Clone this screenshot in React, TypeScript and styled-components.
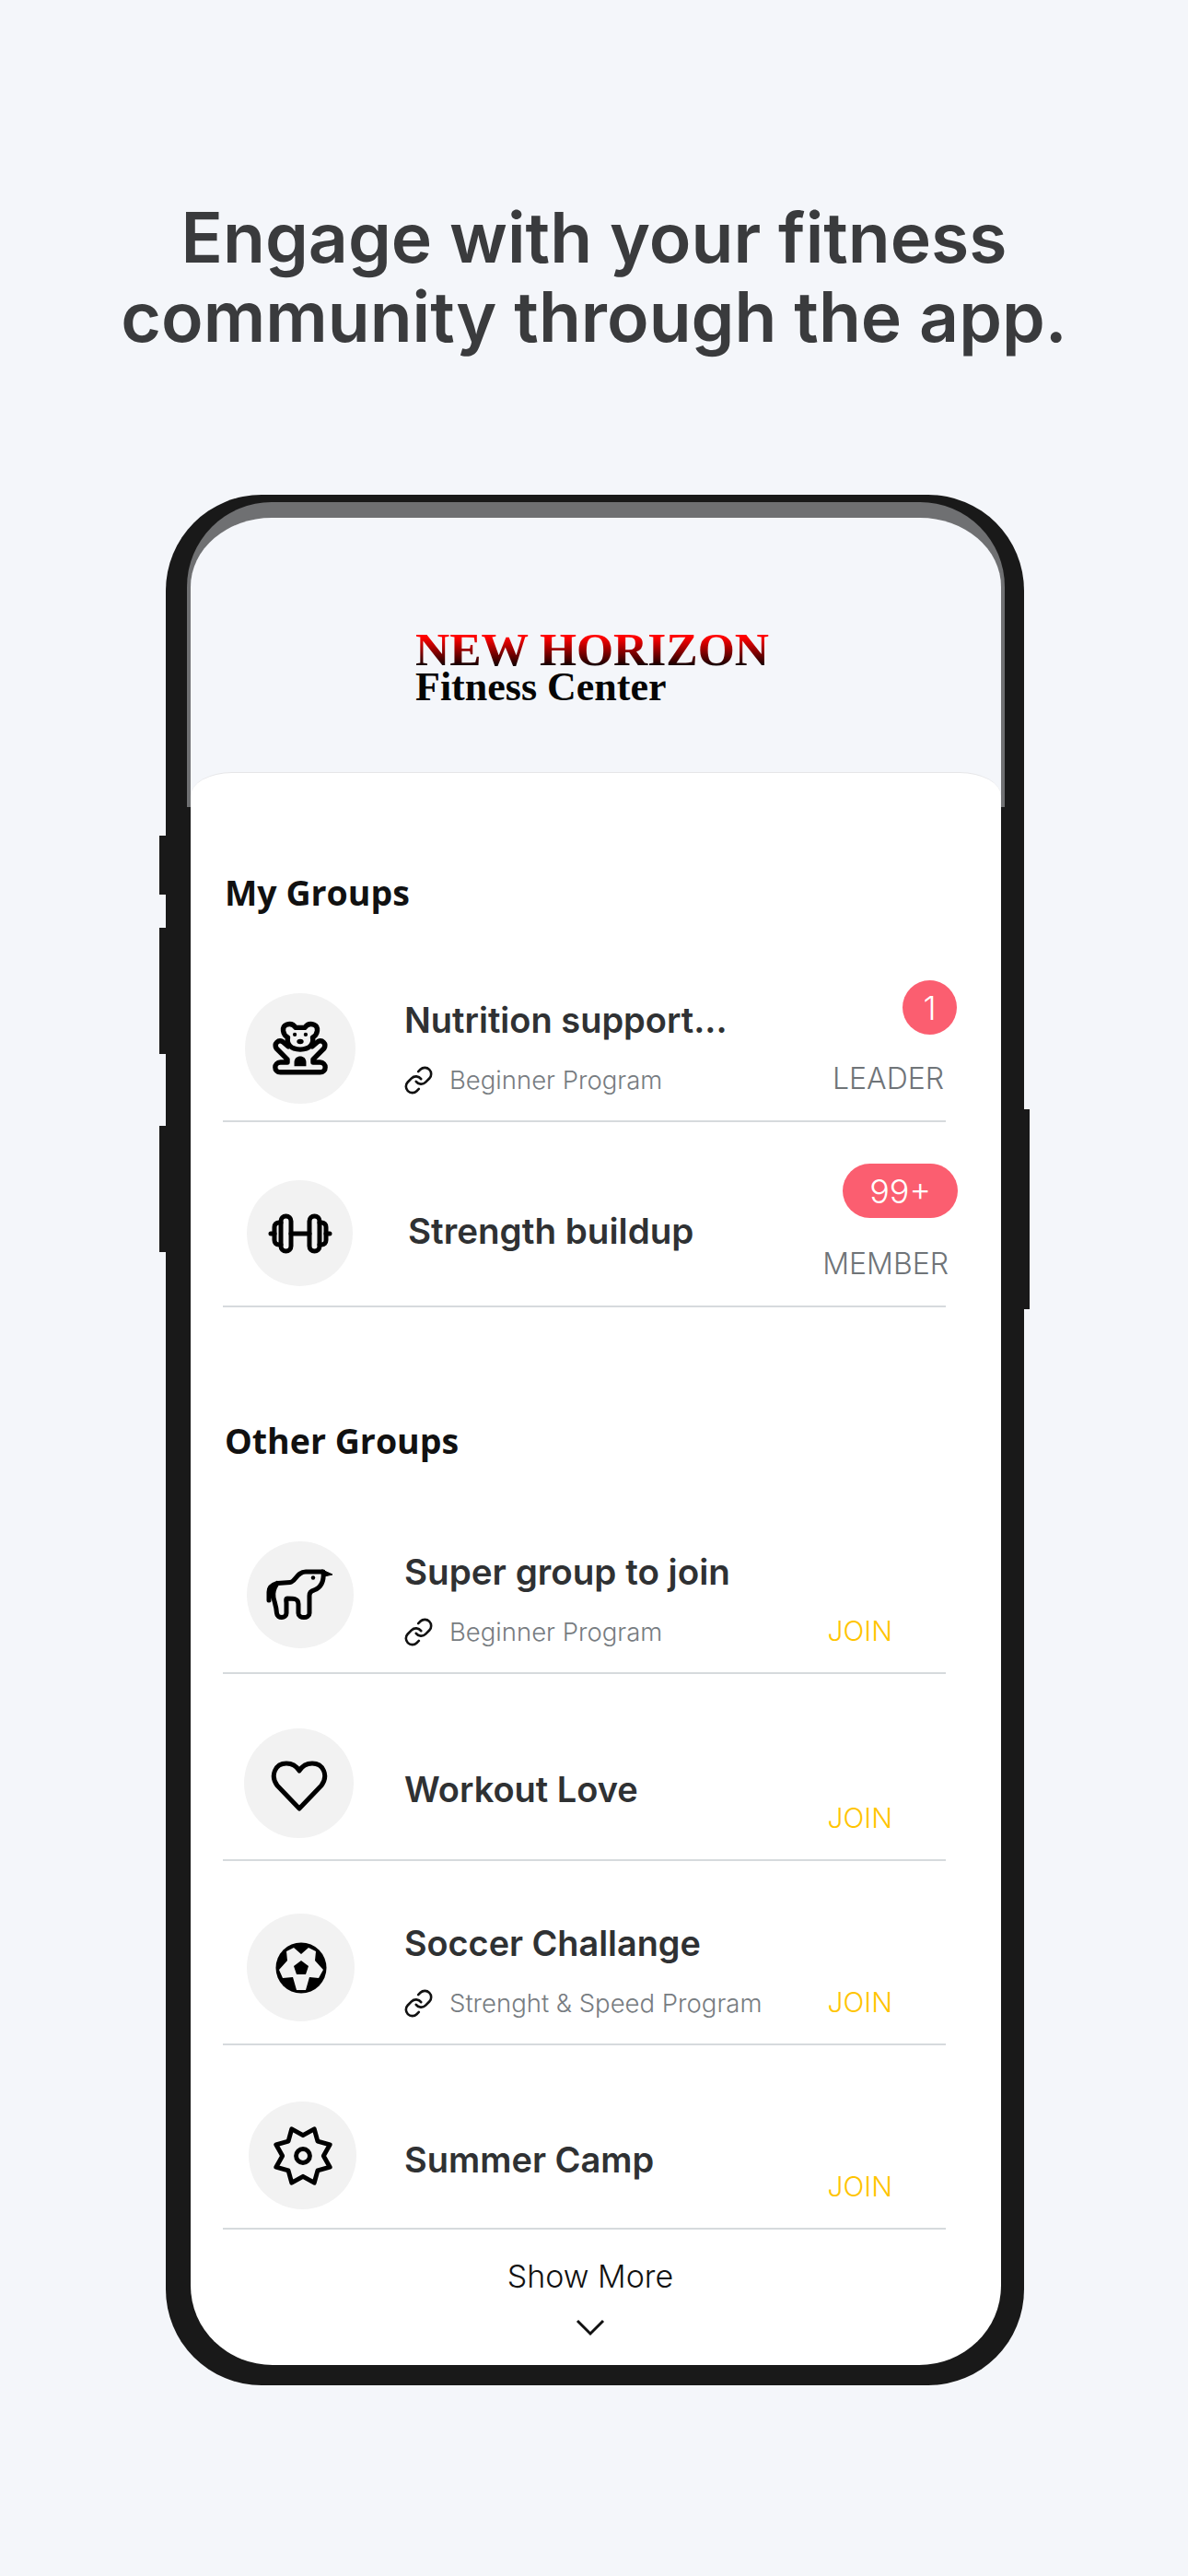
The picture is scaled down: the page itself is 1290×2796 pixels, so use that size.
import React from 'react';
import styled, { createGlobalStyle } from 'styled-components';
import { Link } from 'lucide-react';

const GlobalStyle = createGlobalStyle`
  html, body {
    margin: 0;
    padding: 0;
    background: #f4f6fa;
  }
  * {
    box-sizing: border-box;
  }
`;

const FONT = `Inter, 'Open Sans', sans-serif`;

const Page = styled.div`
  width: 1290px;
  height: 2796px;
  overflow: hidden;
  display: flex;
  flex-direction: column;
  align-items: center;
  background: #f4f6fa;
  font-family: ${FONT};
`;

const Headline = styled.h1`
  margin: 215px 0 0;
  height: 322px;
  font-size: 75px;
  line-height: 86px;
  font-weight: 600;
  color: #3a3b3d;
  text-align: center;
`;

const Phone = styled.div`
  position: relative;
  width: 932px;
  margin-left: 2px;
  padding: 8px 21px 22px 23px;
  border-radius: 104px;
  background: #191919;
`;

const SideButton = styled.span<{ $side: 'left' | 'right'; $top: number; $h: number }>`
  position: absolute;
  top: ${(p) => p.$top}px;
  height: ${(p) => p.$h}px;
  width: 8px;
  background: #191919;
  ${(p) => (p.$side === 'left' ? 'left: -7px;' : 'right: -6px;')}
`;

const Header = styled.header`
  height: 331px;
  margin-bottom: -38px;
  padding: 120px 0 0 244px;
  background: #f4f6fa;
  border-style: solid;
  border-color: #6f7072;
  border-width: 17px 4px 0;
  border-radius: 92px 92px 0 0;
  font-family: 'Liberation Serif', 'Times New Roman', serif;
  font-weight: 700;
`;

const LogoTop = styled.div`
  width: max-content;
  font-size: 51.5px;
  line-height: 46px;
  background: linear-gradient(180deg, #ff0000 22%, #120000 88%);
  -webkit-background-clip: text;
  background-clip: text;
  color: transparent;
`;

const LogoBottom = styled.div`
  font-size: 44px;
  line-height: 35px;
  color: #050505;
`;

const Card = styled.main`
  position: relative;
  margin: 0 4px;
  background: #fff;
  border-top: 1px solid #e6e6e8;
  border-radius: 45px 45px 89px 89px / 26px 26px 86px 86px;
`;

const GroupTitle = styled.h2<{ $top: number; $bottom: number }>`
  margin: ${(p) => p.$top}px 0 ${(p) => p.$bottom}px 37px;
  font-family: 'Open Sans', sans-serif;
  font-size: 37.5px;
  line-height: 52px;
  font-weight: 700;
  color: #111;
`;

const Row = styled.div<{ $h: number }>`
  display: flex;
  align-items: flex-end;
  height: ${(p) => p.$h}px;
  margin: 0 60px 0 35px;
  border-bottom: 2px solid #d6dadd;
`;

const IconSlot = styled.div`
  flex: 0 0 197px;
  align-self: stretch;
  display: flex;
  align-items: flex-end;
`;

const IconCircle = styled.div<{ $size: number; $left: number; $bottom: number }>`
  display: flex;
  align-items: center;
  justify-content: center;
  width: ${(p) => p.$size}px;
  height: ${(p) => p.$size}px;
  margin: 0 0 ${(p) => p.$bottom}px ${(p) => p.$left}px;
  border-radius: 50%;
  background: #f2f2f2;
`;

const Body = styled.div<{ $left: number; $bottom: number }>`
  display: flex;
  flex-direction: column;
  margin: 0 0 ${(p) => p.$bottom}px ${(p) => p.$left}px;
`;

const Title = styled.div<{ $size?: number }>`
  font-size: ${(p) => p.$size ?? 38}px;
  line-height: 46px;
  font-weight: 600;
  color: #2f3133;
  white-space: nowrap;
`;

const Program = styled.div`
  display: flex;
  align-items: center;
  gap: 17px;
  margin: 25px 0 0 -1px;
  font-size: 27.5px;
  line-height: 34px;
  font-weight: 300;
  color: #777c81;
  white-space: nowrap;

  svg {
    flex: none;
    color: #111;
  }
`;

const Meta = styled.div`
  margin-left: auto;
  display: flex;
  flex-direction: column;
  align-items: flex-end;
`;

const Badge = styled.span<{ $right: number; $gap: number; $pad: number }>`
  display: flex;
  align-items: center;
  justify-content: center;
  height: 59px;
  min-width: 59px;
  padding: 0 ${(p) => p.$pad}px;
  margin: 0 ${(p) => p.$right}px ${(p) => p.$gap}px 0;
  border-radius: 30px;
  background: #fb5e70;
  color: #fff;
  font-size: 36px;
  font-weight: 300;
`;

const Role = styled.span<{ $join?: boolean; $right: number }>`
  margin: 0 ${(p) => p.$right}px 28px 0;
  font-size: ${(p) => (p.$join ? 30 : 32)}px;
  line-height: 34px;
  font-weight: 300;
  color: ${(p) => (p.$join ? '#ffc400' : '#6f7478')};
`;

const Footer = styled.button`
  display: flex;
  flex-direction: column;
  align-items: center;
  width: 100%;
  height: 147px;
  padding: 28px 12px 0 0;
  border: 0;
  background: none;
  font-family: ${FONT};
  font-size: 34px;
  line-height: 46px;
  font-weight: 300;
  color: #111;

  svg {
    margin-top: 22px;
  }
`;

const TeddyIcon = () => (
  <svg width="86" height="82" viewBox="0 0 80 76" fill="none" stroke="#000" strokeWidth="5" strokeLinejoin="round" strokeLinecap="round">
    <path d="M27.500 27C22 24 21 16 26 14C30 12.500 33.500 14 35.500 17H44.500C46.500 14 50 12.500 54 14C59 16 58 24 52.500 27C54 33 50 39 40 39C30 39 26 33 27.500 27Z" />
    <path d="M28 36L22 31C18 29 13 33 16 38L27 49V52H20C13 52 13 62 20 62H60C67 62 67 52 60 52H53V49L64 38C67 33 62 29 58 31L52 36" />
    <circle cx="34.500" cy="24" r="2" fill="#000" stroke="none" />
    <circle cx="45.500" cy="24" r="2" fill="#000" stroke="none" />
    <ellipse cx="40" cy="31" rx="3.400" ry="2.600" fill="#000" stroke="none" />
    <path d="M34 56V52C34 44 46 44 46 52V56Z" fill="#000" stroke="none" />
  </svg>
);

const DumbbellIcon = () => (
  <svg width="80" height="80" viewBox="0 0 80 80" fill="none" stroke="#000" strokeWidth="5" strokeLinecap="round" strokeLinejoin="round">
    <rect x="19" y="21" width="11" height="38" rx="5.500" />
    <rect x="50" y="21" width="11" height="38" rx="5.500" />
    <path d="M19 28H17C14 28 12 30 12 33V47C12 50 14 52 17 52H19" />
    <path d="M61 28H63C66 28 68 30 68 33V47C68 50 66 52 63 52H61" />
    <path d="M30 40H50M8 40H12M68 40H72" />
  </svg>
);

const UnicornIcon = () => (
  <svg width="80" height="64" viewBox="0 0 80 64" fill="none" stroke="#000" strokeWidth="5" strokeLinecap="round" strokeLinejoin="round">
    <path d="M6 38V29C6 24 10 21 15 19.500L29 18.500C35 18 36 7 46 7H65C66 17 63 24 55 27C51 28 50 30 50 33V52C50 58 38 58 38 52V42C38 36 33 36 26 36C24 36 25 39 25 41V52C25 58 15 58 14.500 52C14 44 12 40 11 35C10 30 12 24 15 19.500" />
    <path d="M64 5L75 10L64 12.500Z" fill="#000" strokeWidth="1" />
    <circle cx="54" cy="13.500" r="2.200" fill="#000" stroke="none" />
  </svg>
);

const HeartIcon = () => (
  <svg width="64" height="64" viewBox="0 -6 64 64" fill="none" stroke="#000" strokeWidth="5" strokeLinejoin="round">
    <path d="M32 53L8 28C0 17 6 4 18 4C24 4 29 7 32 12C35 7 40 4 46 4C58 4 64 17 56 28Z" />
  </svg>
);

const BallIcon = () => (
  <svg width="56" height="56" viewBox="0 0 56 56">
    <circle cx="28" cy="28" r="27.500" fill="#000" />
    <path d="M28 13L36 6L44 10L43 20L52 30L47 39L37 38L33 52H23L19 38L8 39L4 30L13 20L12 10L20 6Z" fill="#f2f2f2" />
    <path d="M28 20L36 26L33 35H23L20 26Z" fill="#000" />
  </svg>
);

const SunIcon = () => (
  <svg width="68" height="68" viewBox="-2 -2 64 64" fill="none" stroke="#000" strokeWidth="4.600" strokeLinejoin="round">
    <path d="M18.500 2.500L30 9L41.500 2.500L45 15L57.500 18.500L51 30L57.500 41.500L45 45L41.500 57.500L30 51L18.500 57.500L15 45L2.500 41.500L9 30L2.500 18.500L15 15Z" />
    <circle cx="30" cy="30" r="7" />
  </svg>
);

const ChevronIcon = () => (
  <svg width="34" height="20" viewBox="0 0 34 20" fill="none" stroke="#111" strokeWidth="3">
    <path d="M3 3L17 17L31 3" />
  </svg>
);

interface GroupRow {
  title: string;
  titleSize?: number;
  program?: string;
  icon: React.ReactNode;
  height: number;
  circle: { size: number; left: number; bottom: number };
  bodyLeft?: number;
  bodyBottom: number;
  role: string;
  roleRight: number;
  join?: boolean;
  badge?: { text: string; right: number; gap: number; pad: number };
}

const myGroups: GroupRow[] = [
  {
    title: 'Nutrition support...',
    program: 'Beginner Program',
    icon: <TeddyIcon />,
    height: 200,
    circle: { size: 120, left: 24, bottom: 18 },
    bodyBottom: 27,
    role: 'LEADER',
    roleRight: 2,
    badge: { text: '1', right: -12, gap: 31, pad: 14 },
  },
  {
    title: 'Strength buildup',
    titleSize: 38.6,
    icon: <DumbbellIcon />,
    height: 201,
    circle: { size: 115, left: 26, bottom: 21 },
    bodyLeft: 4,
    bodyBottom: 58,
    role: 'MEMBER',
    roleRight: -3,
    badge: { text: '99+', right: -13, gap: 33, pad: 29 },
  },
];

const otherGroups: GroupRow[] = [
  {
    title: 'Super group to join',
    titleSize: 38.6,
    program: 'Beginner Program',
    icon: <UnicornIcon />,
    height: 200,
    circle: { size: 116, left: 26, bottom: 26 },
    bodyBottom: 27,
    role: 'JOIN',
    roleRight: 58,
    join: true,
  },
  {
    title: 'Workout Love',
    icon: <HeartIcon />,
    height: 203,
    circle: { size: 119, left: 23, bottom: 23 },
    bodyBottom: 53,
    role: 'JOIN',
    roleRight: 58,
    join: true,
  },
  {
    title: 'Soccer Challange',
    titleSize: 37.8,
    program: 'Strenght & Speed Program',
    icon: <BallIcon />,
    height: 200,
    circle: { size: 117, left: 26, bottom: 24 },
    bodyBottom: 27,
    role: 'JOIN',
    roleRight: 58,
    join: true,
  },
  {
    title: 'Summer Camp',
    icon: <SunIcon />,
    height: 200,
    circle: { size: 117, left: 28, bottom: 20 },
    bodyBottom: 51,
    role: 'JOIN',
    roleRight: 58,
    join: true,
  },
];

const GroupItem = ({ group }: { group: GroupRow }) => (
  <Row $h={group.height}>
    <IconSlot>
      <IconCircle $size={group.circle.size} $left={group.circle.left} $bottom={group.circle.bottom}>
        {group.icon}
      </IconCircle>
    </IconSlot>
    <Body $left={group.bodyLeft ?? 0} $bottom={group.bodyBottom}>
      <Title $size={group.titleSize}>{group.title}</Title>
      {group.program && (
        <Program>
          <Link size={33} strokeWidth={1.9} />
          {group.program}
        </Program>
      )}
    </Body>
    <Meta>
      {group.badge && (
        <Badge $right={group.badge.right} $gap={group.badge.gap} $pad={group.badge.pad}>
          {group.badge.text}
        </Badge>
      )}
      <Role $join={group.join} $right={group.roleRight}>
        {group.role}
      </Role>
    </Meta>
  </Row>
);

export default function App() {
  return (
    <Page>
      <GlobalStyle />
      <Headline>
        Engage with your fitness
        <br />
        community through the app.
      </Headline>
      <Phone>
        <SideButton $side="left" $top={370} $h={64} />
        <SideButton $side="left" $top={470} $h={137} />
        <SideButton $side="left" $top={685} $h={137} />
        <SideButton $side="right" $top={667} $h={217} />
        <Header>
          <LogoTop>NEW HORIZON</LogoTop>
          <LogoBottom>Fitness Center</LogoBottom>
        </Header>
        <Card>
          <GroupTitle $top={104} $bottom={23}>My Groups</GroupTitle>
          {myGroups.map((group) => (
            <GroupItem key={group.title} group={group} />
          ))}
          <GroupTitle $top={119} $bottom={27}>Other Groups</GroupTitle>
          {otherGroups.map((group) => (
            <GroupItem key={group.title} group={group} />
          ))}
          <Footer type="button">
            Show More
            <ChevronIcon />
          </Footer>
        </Card>
      </Phone>
    </Page>
  );
}
